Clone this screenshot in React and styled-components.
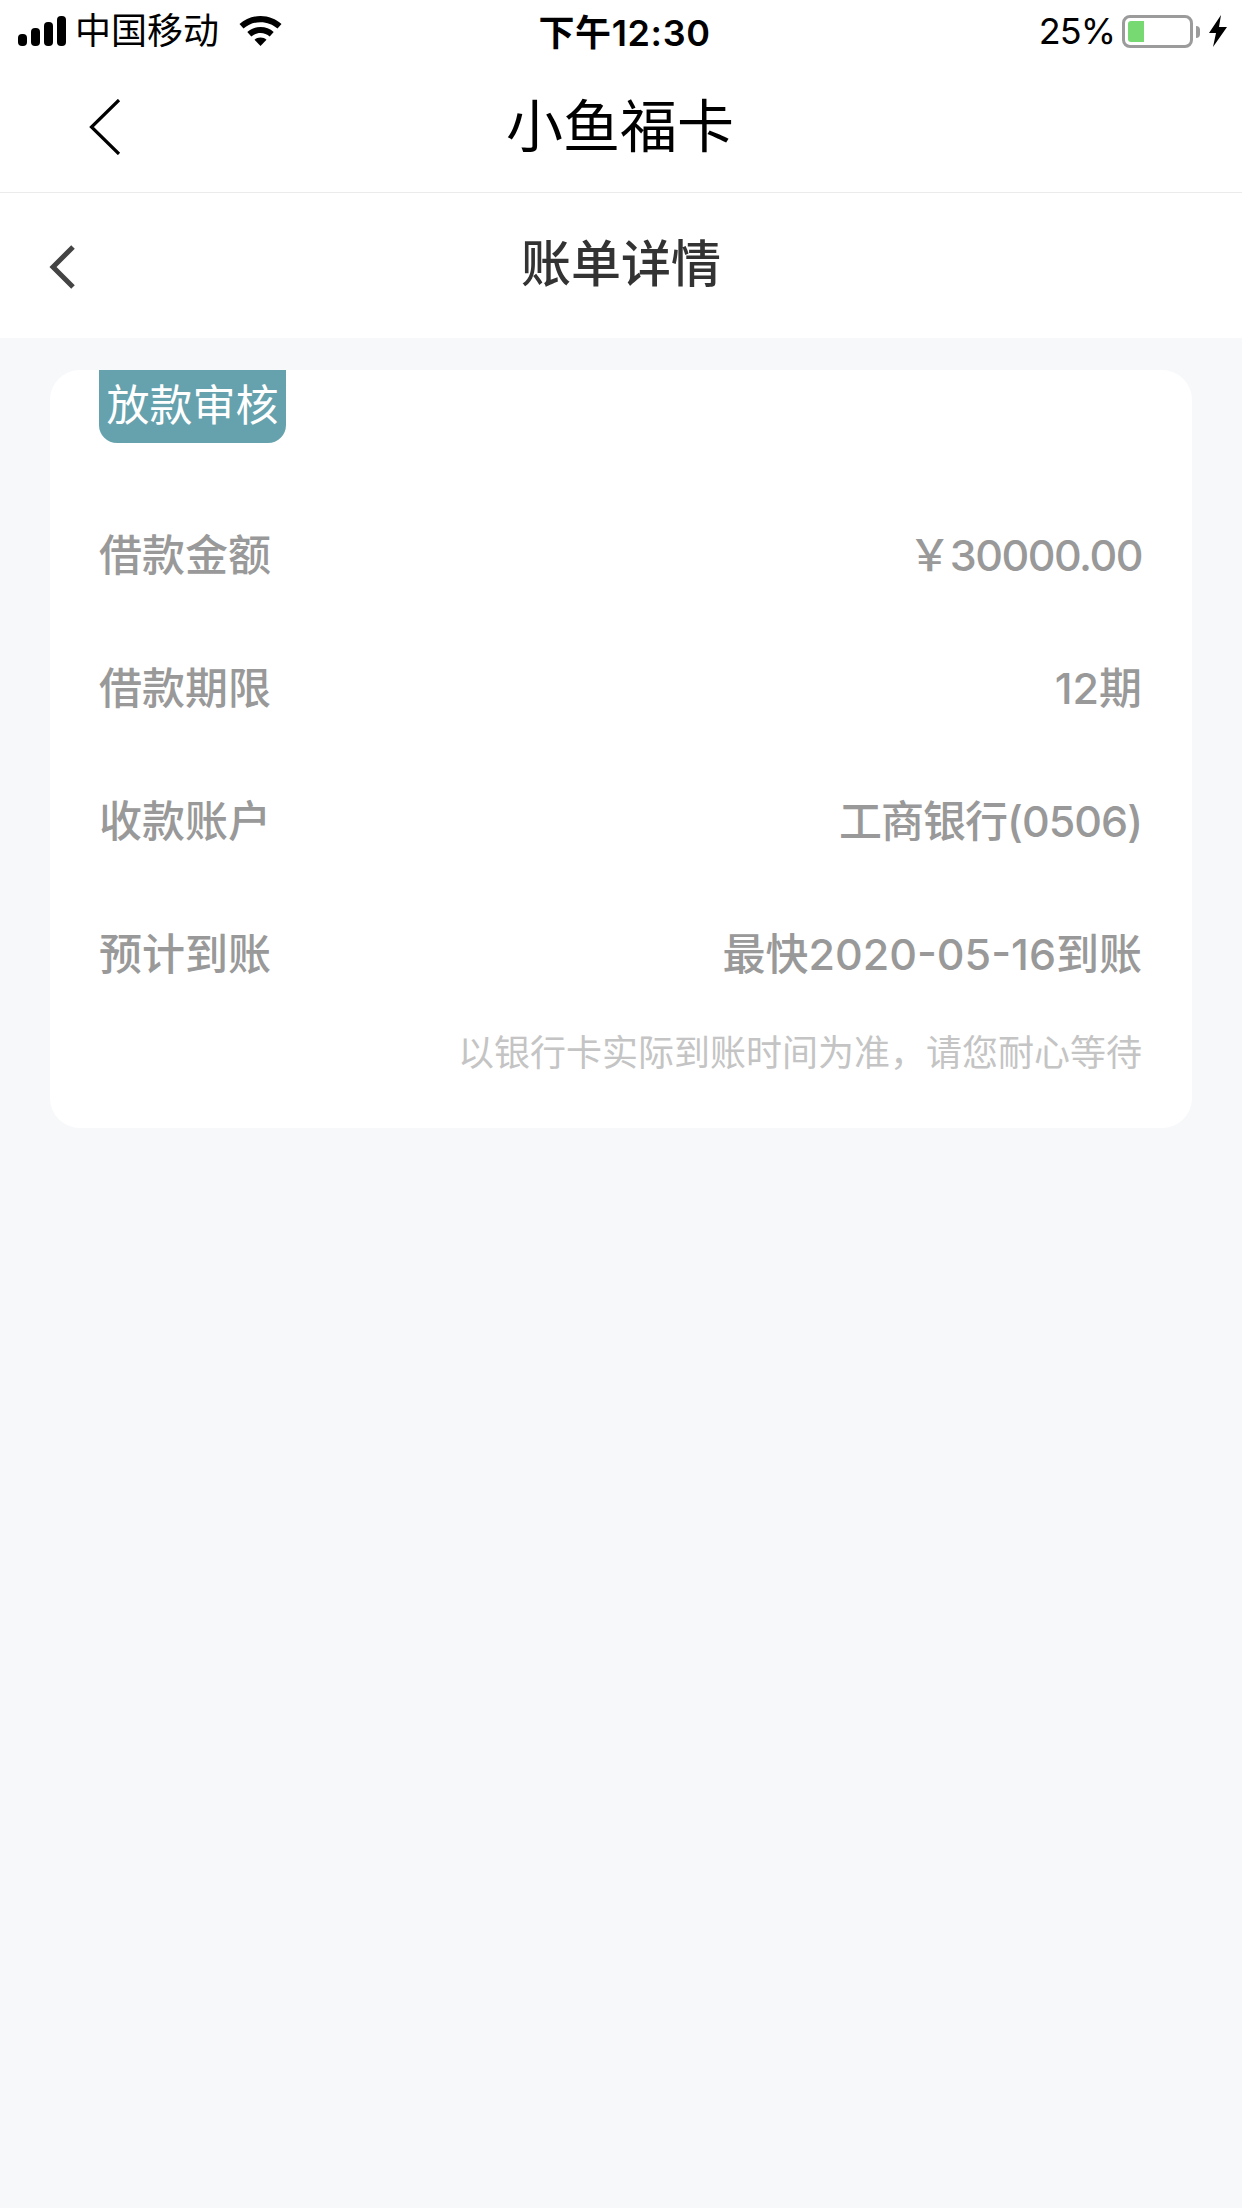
import React from "react";
import styled, { createGlobalStyle } from "styled-components";

const Global = createGlobalStyle`
  html, body { margin: 0; padding: 0; background: #f7f8fa; }
  #root { min-height: 2208px; }
  * { box-sizing: border-box; }
`;
const FONT = `Inter, "Noto Sans CJK SC", sans-serif`;

const Page = styled.div`
  width: 1242px; height: 2208px; display: flex; flex-direction: column;
  background: #f7f8fa; font-family: ${FONT}; overflow: hidden;
`;
const StatusBar = styled.div`
  height: 62px; background: #fff; display: grid; grid-template-columns: 1fr auto 1fr;
  align-items: center; padding: 0 15px 0 18px; color: #000; font-size: 36px;
`;
const StatusLeft = styled.div`display: flex; align-items: center;`;
const Carrier = styled.span`margin-left: 9px; margin-right: 20px; line-height: 62px;`;
const Clock = styled.span`font-weight: 600; font-size: 36px; margin-left: 4px; margin-top: -3px; letter-spacing: 0.6px;`;
const StatusRight = styled.div`display: flex; align-items: center; justify-content: flex-end;`;
const Percent = styled.span`margin-right: 7px; letter-spacing: -1px;`;
const Battery = styled.div`
  width: 71px; height: 33px; border: 3px solid #9b9b9b; border-radius: 8px; padding: 3px;
  position: relative; margin-right: 16px;
  &::after {
    content: ""; position: absolute; right: -10px; top: 8px; width: 4px; height: 12px;
    background: #9b9b9b; border-radius: 0 4px 4px 0;
  }
`;
const BatteryFill = styled.div`width: 16px; height: 100%; background: #76d972; border-radius: 3px 0 0 3px;`;
const NavBar = styled.div`
  height: 131px; background: #fff; border-bottom: 1px solid #ebebeb; display: grid;
  grid-template-columns: 1fr auto 1fr; align-items: center;
`;
const NavBack = styled.svg`display: block; margin-left: 89px;`;
const NavTitle = styled.div`font-size: 57px; color: #000; line-height: 70px; margin-top: -1px; margin-left: -2px;`;
const SubBar = styled.div`
  height: 145px; background: #fff; display: grid; grid-template-columns: 1fr auto 1fr; align-items: center;
`;
const SubBack = styled.svg`display: block; margin-left: 48px; margin-top: 2px;`;
const SubTitle = styled.div`font-size: 50px; font-weight: 500; color: #333; margin-top: -4px; line-height: 64px;`;
const Card = styled.section`
  margin: 32px 50px 0; height: 758px; background: #fff; border-radius: 30px; padding: 0 50px 0 49px;
  display: flex; flex-direction: column;
`;
const Tag = styled.div`
  align-self: flex-start; width: 187px; height: 73px; background: #65a2ae; color: #fff;
  border-radius: 0 0 18px 18px; font-size: 43px; line-height: 70px; text-align: center;
`;
const Rows = styled.div`display: flex; flex-direction: column; margin-top: 42px;`;
const Row = styled.div`
  height: 133px; display: flex; justify-content: space-between; align-items: center;
  font-size: 43px; font-weight: 500; color: #999;
`;
const Label = styled.span``;
const Value = styled.span`letter-spacing: ${(p) => p.$tight}px;`;
const Note = styled.div`
  margin-top: 12px; text-align: right; font-size: 36px; line-height: 48px; color: #c4c4c4;
`;

const rows = [
  ["借款金额", "￥30000.00", -1.5],
  ["借款期限", "12期", 0],
  ["收款账户", "工商银行(0506)", -1],
  ["预计到账", "最快2020-05-16到账", 0],
];

export default function App() {
  return (
    <Page>
      <Global />
      <StatusBar>
        <StatusLeft>
          <svg width="48" height="30" viewBox="0 0 48 30" fill="#000">
            <rect x="0" y="18" width="9" height="12" rx="4" />
            <rect x="13" y="12" width="9" height="18" rx="4" />
            <rect x="26" y="6" width="9" height="24" rx="4" />
            <rect x="39" y="0" width="9" height="30" rx="4" />
          </svg>
          <Carrier>中国移动</Carrier>
          <svg width="43" height="30" viewBox="0 0 43 30" fill="#000">
            <path d="M21.5 0C13.4 0 6 3 .5 8l4 4.6C9 8.6 15 6.2 21.5 6.2S34 8.6 38.5 12.6l4-4.6C37 3 29.6 0 21.5 0Z" />
            <path d="M21.5 11c-5 0-9.6 1.8-13.2 5l4 4.6c2.5-2.2 5.7-3.5 9.2-3.5s6.7 1.3 9.2 3.5l4-4.6C31.1 12.8 26.5 11 21.5 11Z" />
            <path d="M21.5 21.5c-2.4 0-4.5.9-6 2.3l6 6.2 6-6.2c-1.5-1.4-3.6-2.3-6-2.3Z" />
          </svg>
        </StatusLeft>
        <Clock>下午12:30</Clock>
        <StatusRight>
          <Percent>25%</Percent>
          <Battery><BatteryFill /></Battery>
          <svg width="18" height="32" viewBox="0 0 18 32" fill="#000">
            <path d="M12 0 0 18h7L4 32 18 12h-8Z" />
          </svg>
        </StatusRight>
      </StatusBar>
      <NavBar>
        <NavBack width="32" height="56" viewBox="0 0 32 56" fill="none" stroke="#000" strokeWidth="3.2">
          <path d="M30 1 2.5 28 30 55" />
        </NavBack>
        <NavTitle>小鱼福卡</NavTitle>
        <span />
      </NavBar>
      <SubBar>
        <SubBack width="28" height="44" viewBox="0 0 28 44" fill="none" stroke="#444" strokeWidth="5">
          <path d="M25 2 5 22l20 20" />
        </SubBack>
        <SubTitle>账单详情</SubTitle>
        <span />
      </SubBar>
      <Card>
        <Tag>放款审核</Tag>
        <Rows>
          {rows.map(([k, v, tight]) => (
            <Row key={k}><Label>{k}</Label><Value $tight={tight}>{v}</Value></Row>
          ))}
        </Rows>
        <Note>以银行卡实际到账时间为准，请您耐心等待</Note>
      </Card>
    </Page>
  );
}
